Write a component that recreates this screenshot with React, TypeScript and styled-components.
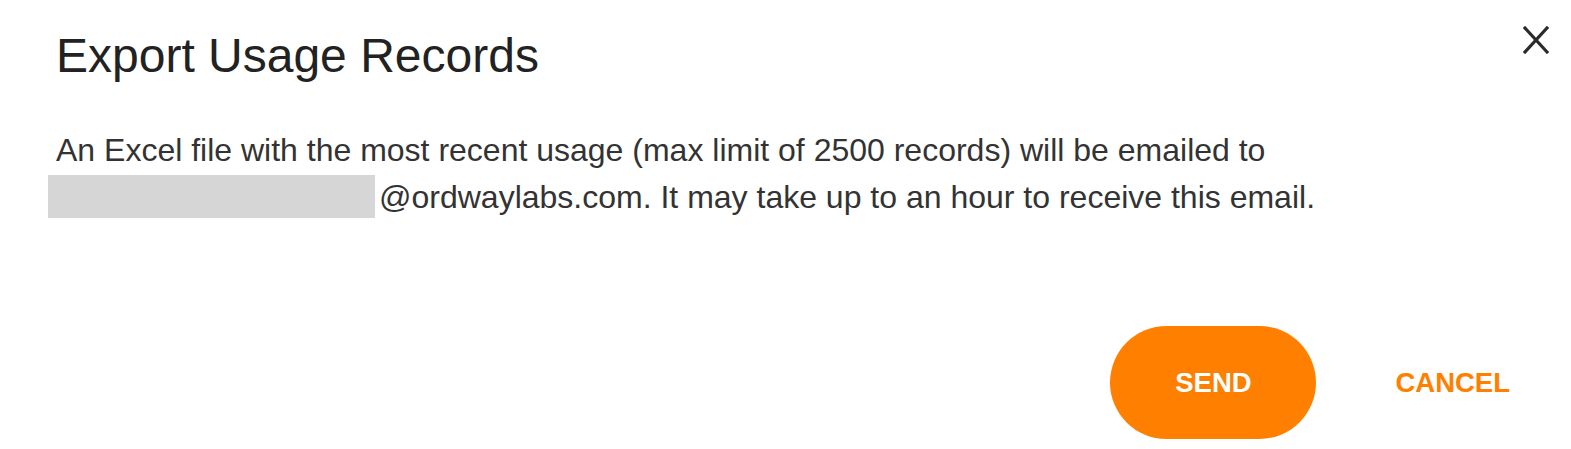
import styled, { createGlobalStyle } from "styled-components";

const GlobalStyle = createGlobalStyle`
  html, body {
    margin: 0;
    padding: 0;
    background: #ffffff;
  }

  body {
    font-family: "Liberation Sans", Arial, Helvetica, sans-serif;
    color: #333333;
  }
`;

const Dialog = styled.div`
  position: relative;
  width: 1571px;
  height: 449px;
  box-sizing: border-box;
  padding: 0 61px 10px 56px;
  display: flex;
  flex-direction: column;
  background: #ffffff;
`;

const CloseButton = styled.button`
  position: absolute;
  top: 25px;
  right: 21px;
  width: 28px;
  height: 30px;
  padding: 0;
  border: none;
  background: transparent;
  cursor: pointer;
  display: flex;
  align-items: center;
  justify-content: center;
`;

const Title = styled.h2`
  margin: 28px 0 0;
  font-size: 48px;
  line-height: 56px;
  font-weight: 400;
  color: #222222;
`;

const Message = styled.p`
  margin: 43px 0 0;
  font-size: 32px;
  line-height: 47px;
  color: #333333;
`;

const Redacted = styled.span`
  display: inline-block;
  width: 327px;
  height: 43px;
  margin: 0 4px 0 -8px;
  vertical-align: -10px;
  background: #d6d6d6;
`;

const Actions = styled.div`
  margin-top: auto;
  display: flex;
  justify-content: flex-end;
  align-items: center;
  gap: 79px;
`;

const ActionButton = styled.button<{ $primary?: boolean }>`
  font-family: "Liberation Sans", Arial, Helvetica, sans-serif;
  font-size: 27.5px;
  font-weight: 700;
  text-transform: uppercase;
  border: none;
  cursor: pointer;
  padding: 0;
  color: ${(p) => (p.$primary ? "#ffffff" : "#ff8000")};
  background: ${(p) => (p.$primary ? "#ff8000" : "transparent")};
  width: ${(p) => (p.$primary ? "206px" : "auto")};
  height: ${(p) => (p.$primary ? "113px" : "auto")};
  border-radius: ${(p) => (p.$primary ? "57px" : "0")};
`;

const CloseIcon = () => (
  <svg width="26" height="28" viewBox="0 0 26 28" fill="none">
    <path
      d="M2 2L24 26M24 2L2 26"
      stroke="#2b2b2b"
      strokeWidth="3.2"
      strokeLinecap="square"
    />
  </svg>
);

const App = () => {
  return (
    <>
      <GlobalStyle />
      <Dialog>
        <CloseButton type="button" aria-label="Close">
          <CloseIcon />
        </CloseButton>
        <Title>Export Usage Records</Title>
        <Message>
          An Excel file with the most recent usage (max limit of 2500 records)
          will be emailed to <Redacted />
          @ordwaylabs.com. It may take up to an hour to receive this email.
        </Message>
        <Actions>
          <ActionButton type="button" $primary>
            Send
          </ActionButton>
          <ActionButton type="button">Cancel</ActionButton>
        </Actions>
      </Dialog>
    </>
  );
};

export default App;
